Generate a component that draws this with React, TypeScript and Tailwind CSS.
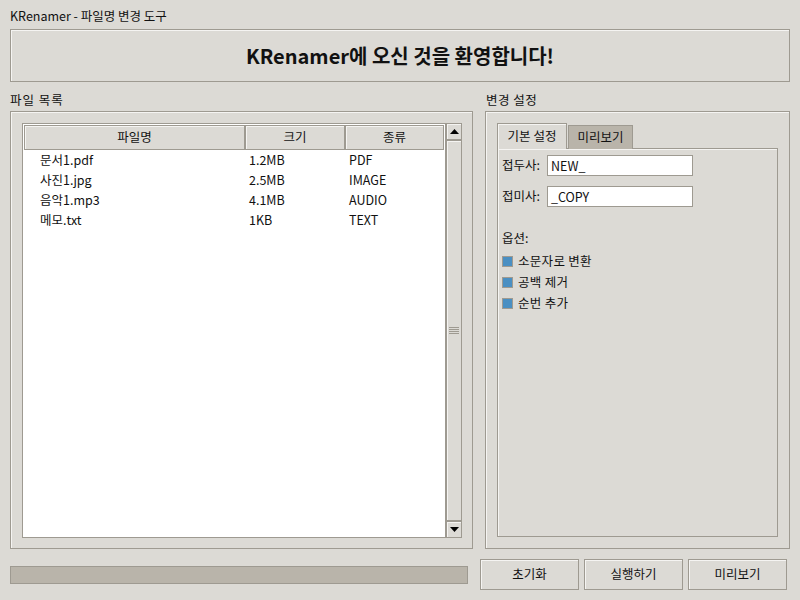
import React from "react";

const font = { fontFamily: '"Noto Sans CJK KR", "Noto Sans", sans-serif' };

const files = [
  { name: "문서1.pdf", size: "1.2MB", type: "PDF" },
  { name: "사진1.jpg", size: "2.5MB", type: "IMAGE" },
  { name: "음악1.mp3", size: "4.1MB", type: "AUDIO" },
  { name: "메모.txt", size: "1KB", type: "TEXT" },
];

function Check({ label }: { label: string }) {
  return (
    <div className="flex items-center h-[21px] gap-[5px]">
      <div className="w-[11px] h-[11px] border border-[#9e9a91] bg-[#4a8fc2]" />
      <span className="tracking-[0.3px]">{label}</span>
    </div>
  );
}

export default function App() {
  return (
    <div
      className="w-[800px] h-[600px] bg-[#dcdad5] text-[12.5px] text-[#111] flex flex-col overflow-hidden"
      style={font}
    >
      <div className="h-[29px] pl-[10px] pt-[6px] leading-[20px]">KRenamer - 파일명 변경 도구</div>
      <div className="mx-[10px] h-[53px] border border-[#9e9a91] shadow-[inset_1px_1px_0_#f5f4f2] flex items-center justify-center text-[20px] font-bold">
        KRenamer에 오신 것을 환영합니다!
      </div>
      <div className="flex px-[10px] gap-[12px] mt-[6px]">
        {/* Left */}
        <div className="w-[463px] flex flex-col">
          <div className="h-[23px] leading-[22px] pt-[1px] tracking-[1px]">파일 목록</div>
          <div className="h-[438px] border border-[#9e9a91] shadow-[inset_1px_1px_0_#f5f4f2] pl-[11px] pr-[10px] pt-[11px] pb-[10px] flex">
            <div className="flex-1 border border-[#9e9a91] bg-white p-[1px] flex flex-col">
              <div className="flex h-[25px] bg-[#dcdad5]">
                <div className="w-[221px] border border-[#9e9a91] shadow-[inset_1px_1px_0_#f5f4f2] flex items-center justify-center">파일명</div>
                <div className="w-[100px] border border-[#9e9a91] shadow-[inset_1px_1px_0_#f5f4f2] flex items-center justify-center">크기</div>
                <div className="flex-1 border border-[#9e9a91] shadow-[inset_1px_1px_0_#f5f4f2] flex items-center justify-center">종류</div>
              </div>
              {files.map((f) => (
                <div key={f.name} className="flex h-[20px] items-center">
                  <div className="w-[221px] pl-[16px]">{f.name}</div>
                  <div className="w-[100px] pl-[4px]">{f.size}</div>
                  <div className="flex-1 pl-[4px]">{f.type}</div>
                </div>
              ))}
            </div>
            <div className="w-[16px] flex flex-col bg-[#dcdad5]">
              <div className="h-[17px] border border-[#9e9a91] shadow-[inset_1px_1px_0_#f5f4f2] flex items-center justify-center">
                <svg width="9" height="5" viewBox="0 0 9 5"><path d="M0 5 L4.5 0 L9 5 Z" fill="#000" /></svg>
              </div>
              <div className="flex-1 border border-[#9e9a91] shadow-[inset_1px_1px_0_#f5f4f2] flex items-center justify-center">
                <div className="flex flex-col gap-[1px] w-[10px]">
                  <div className="h-[1px] bg-[#9e9a91]" />
                  <div className="h-[1px] bg-[#9e9a91]" />
                  <div className="h-[1px] bg-[#9e9a91]" />
                  <div className="h-[1px] bg-[#9e9a91]" />
                </div>
              </div>
              <div className="h-[17px] border border-[#9e9a91] shadow-[inset_1px_1px_0_#f5f4f2] flex items-center justify-center">
                <svg width="9" height="5" viewBox="0 0 9 5"><path d="M0 0 L9 0 L4.5 5 Z" fill="#000" /></svg>
              </div>
            </div>
          </div>
        </div>
        {/* Right */}
        <div className="w-[305px] flex flex-col">
          <div className="h-[23px] leading-[22px] pt-[1px] pl-[1px] tracking-[0.5px]">변경 설정</div>
          <div className="h-[438px] border border-[#9e9a91] shadow-[inset_1px_1px_0_#f5f4f2] px-[11px] pt-[11px] pb-[11px] flex flex-col">
            <div className="flex items-end h-[26px] relative z-10">
              <div className="w-[70px] h-[26px] border border-b-0 border-[#9e9a91] bg-[#dcdad5] shadow-[inset_1px_1px_0_#f5f4f2] flex items-center justify-center">기본 설정</div>
              <div className="ml-[1px] w-[65px] h-[24px] border border-b-0 border-[#9e9a91] bg-[#b9b4aa] flex items-center justify-center">미리보기</div>
            </div>
            <div className="w-[281px] flex-1 -mt-[1px] border border-[#9e9a91] shadow-[inset_1px_1px_0_#f5f4f2] pl-[4px] pt-[6px] flex flex-col">
              <div className="flex items-center h-[21px]">
                <span className="w-[45px]">접두사:</span>
                <div className="w-[146px] h-[21px] border border-[#9e9a91] bg-white pl-[3px] leading-[19px]">NEW_</div>
              </div>
              <div className="flex items-center h-[21px] mt-[10px]">
                <span className="w-[45px]">접미사:</span>
                <div className="w-[146px] h-[21px] border border-[#9e9a91] bg-white pl-[3px] leading-[19px]">_COPY</div>
              </div>
              <div className="h-[21px] mt-[20px] leading-[21px]">옵션:</div>
              <div className="mt-[3px] flex flex-col">
                <Check label="소문자로 변환" />
                <Check label="공백 제거" />
                <Check label="순번 추가" />
              </div>
            </div>
          </div>
        </div>
      </div>
      <div className="flex items-center px-[10px] mt-[10px] h-[31px]">
        <div className="w-[458px] h-[18px] border border-[#9e9a91] bg-[#b9b4aa]" />
        <div className="ml-[12px] flex gap-[5px]">
          {["초기화", "실행하기", "미리보기"].map((b) => (
            <div key={b} className="w-[99px] h-[31px] border border-[#9e9a91] shadow-[inset_1px_1px_0_#f5f4f2] flex items-center justify-center">{b}</div>
          ))}
        </div>
      </div>
    </div>
  );
}
